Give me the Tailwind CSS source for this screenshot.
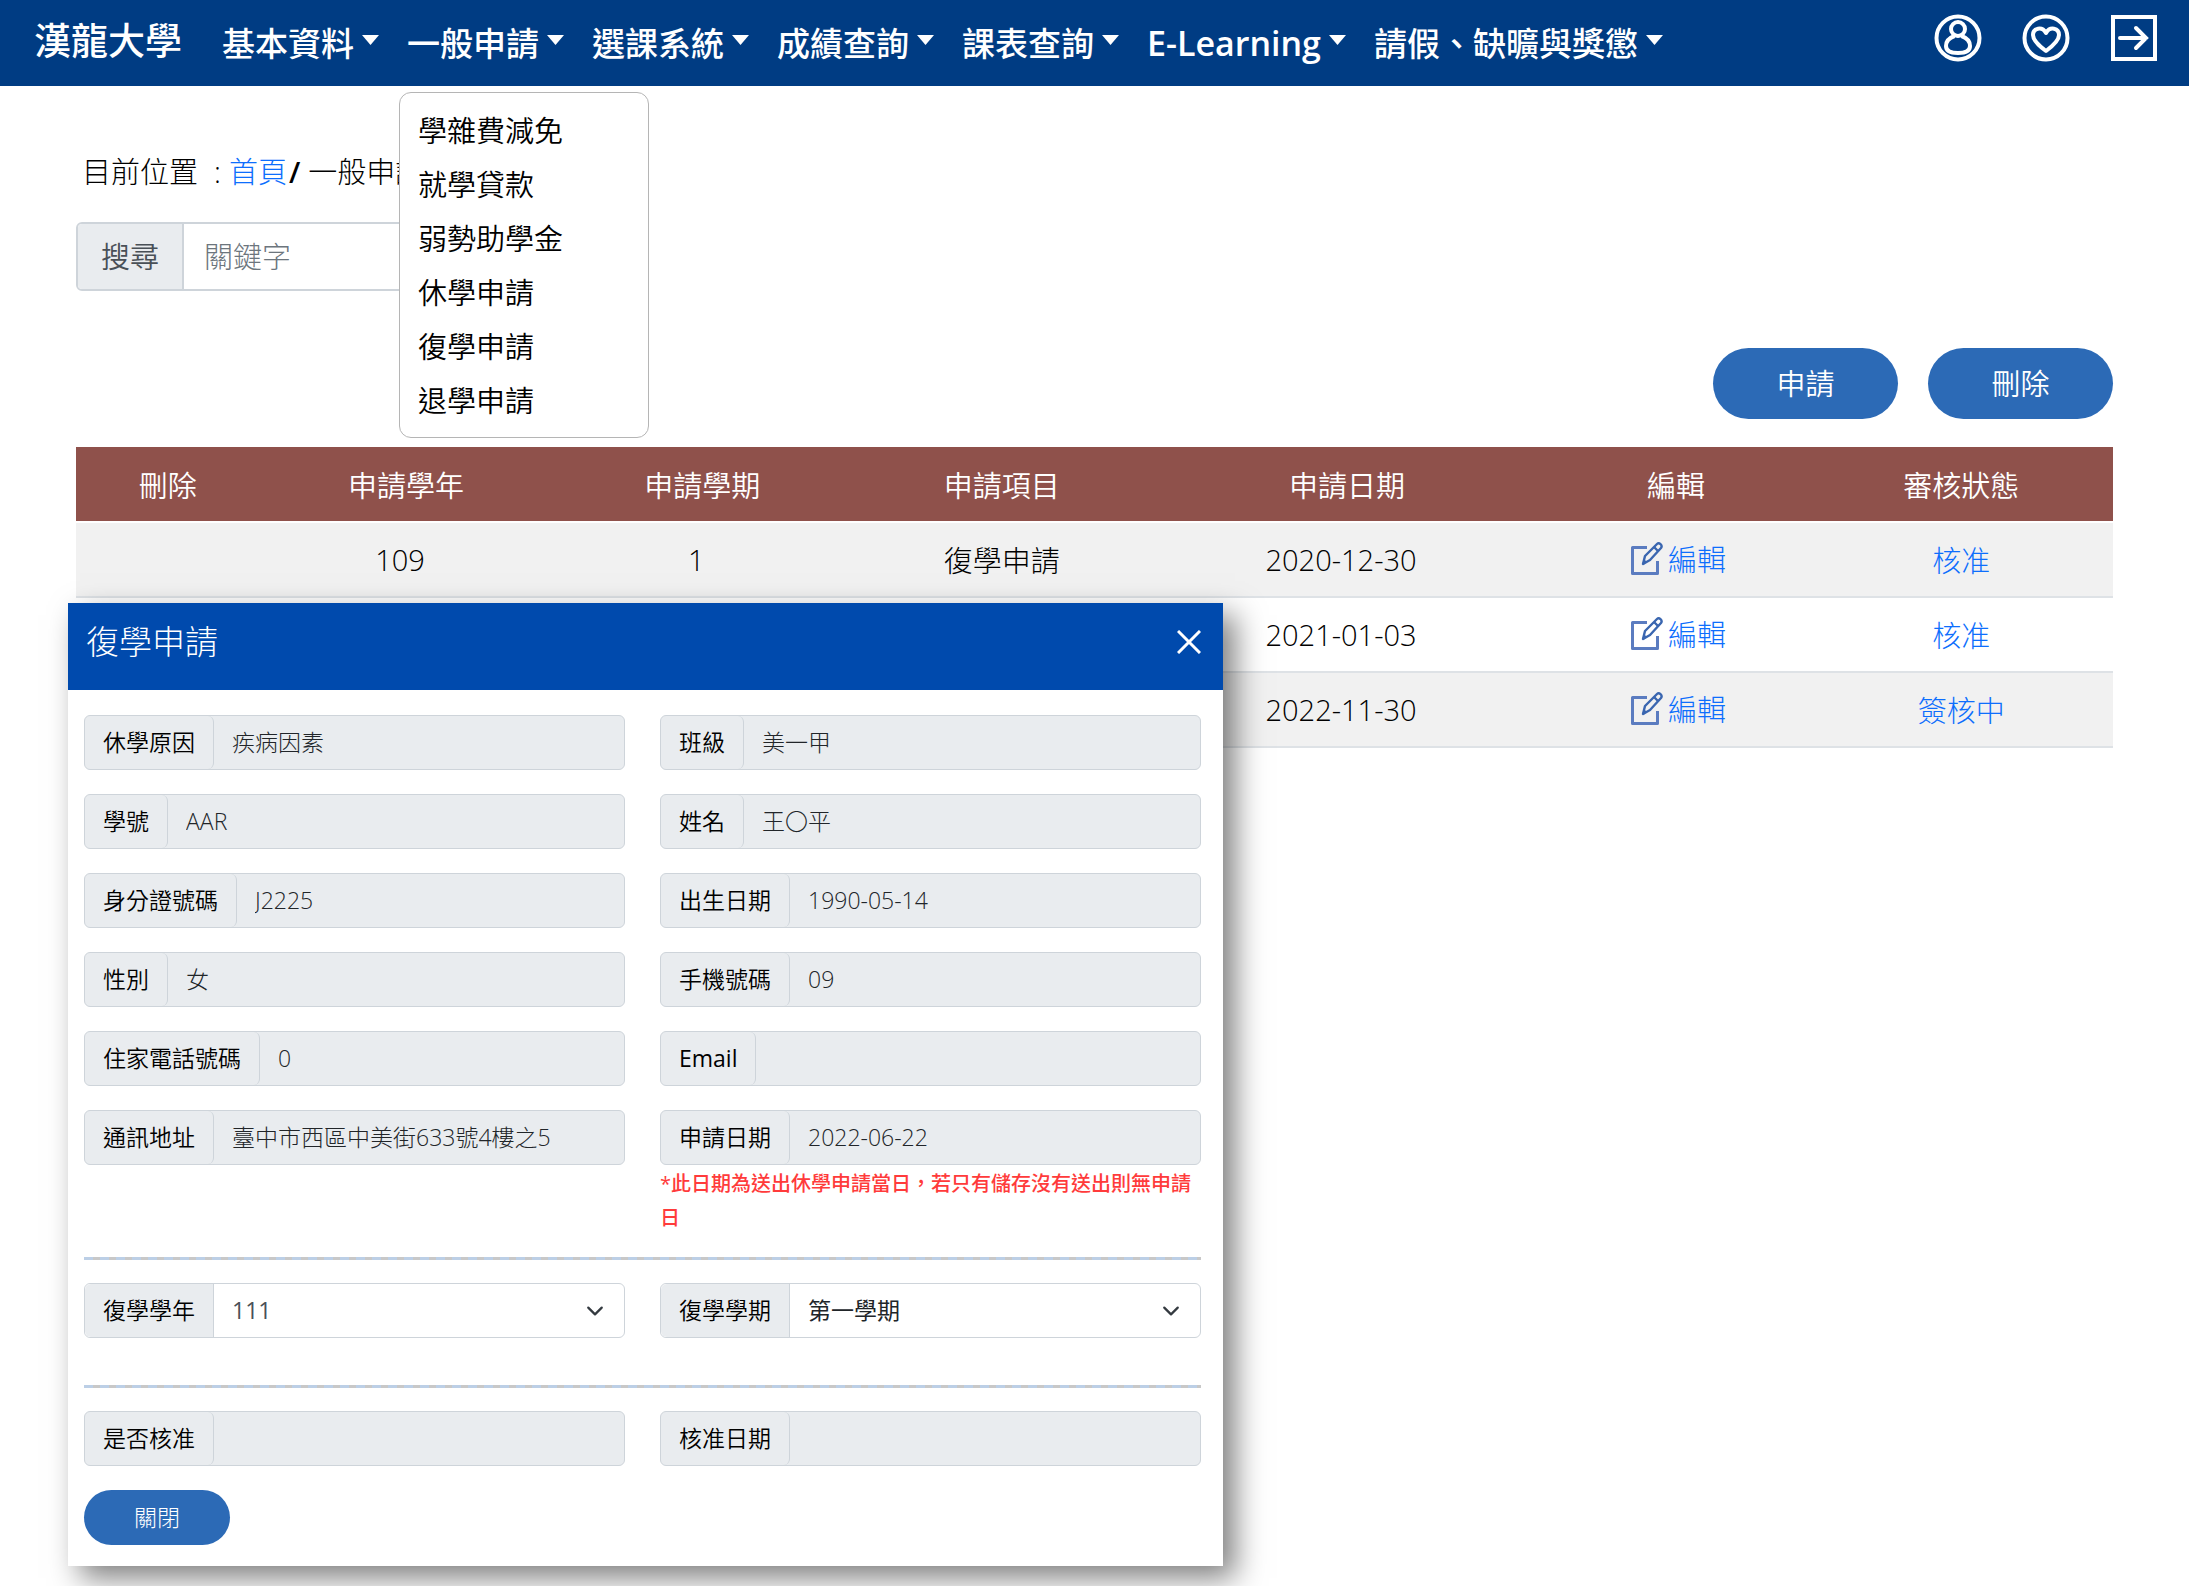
<!DOCTYPE html>
<html lang="zh-Hant">
<head>
<meta charset="utf-8">
<meta name="viewport" content="width=device-width, initial-scale=1">
<title>漢龍大學</title>
<script src="https://cdn.jsdelivr.net/npm/@tailwindcss/browser@4"></script>
</head>
<body class="relative min-h-screen overflow-x-hidden bg-white font-['Open_Sans','Noto_Sans_CJK_TC',sans-serif] font-light text-black">

<svg class="hidden" aria-hidden="true">
  <symbol id="caret" viewBox="0 0 17 10"><path d="M0 0h17L8.500 10z" fill="currentColor"/></symbol>
  <symbol id="chevron" viewBox="0 0 16 16"><path d="m2 5 6 6 6-6" fill="none" stroke="#343a40" stroke-width="2" stroke-linecap="round" stroke-linejoin="round"/></symbol>
  <symbol id="edit" viewBox="0 0 34 36">
    <path d="M17 6.500H2.500v26h25V20" fill="none" stroke="#5b7cc0" stroke-width="3" stroke-linejoin="round"/>
    <path d="M13 23l2-8L27 3c2-2 6 1 4 4L20 19z" fill="none" stroke="#3a66b0" stroke-width="2.400" stroke-linejoin="round"/>
    <path d="m24 6 4 4M13 23l3-3" fill="none" stroke="#3a66b0" stroke-width="2.400"/>
  </symbol>
</svg>

<header class="flex h-[86px] items-center bg-[#003c83] pl-[34px] pr-[31px] text-white">
  <a href="#" class="mr-10 pb-[6px] text-[37px] leading-none font-medium whitespace-nowrap">漢龍大學</a>
  <nav class="h-full">
    <ul class="flex h-full gap-[28px] text-[33px] leading-none font-medium whitespace-nowrap">
      <li class="flex items-center"><a href="#" class="flex items-center gap-2">基本資料<svg class="mb-[6px] h-[10px] w-[17px]"><use href="#caret"/></svg></a></li>
      <li class="relative flex items-center"><a href="#" class="flex items-center gap-2">一般申請<svg class="mb-[6px] h-[10px] w-[17px]"><use href="#caret"/></svg></a>
        <ul class="absolute top-[92px] -left-2 z-20 w-[250px] rounded-xl border border-[#b5b5b5] bg-white pt-[11px] pb-[9px] text-[29px] leading-[54px] font-[350] text-black">
          <li><a href="#" class="block px-[18px]">學雜費減免</a></li>
          <li><a href="#" class="block px-[18px]">就學貸款</a></li>
          <li><a href="#" class="block px-[18px]">弱勢助學金</a></li>
          <li><a href="#" class="block px-[18px]">休學申請</a></li>
          <li><a href="#" class="block px-[18px]">復學申請</a></li>
          <li><a href="#" class="block px-[18px]">退學申請</a></li>
        </ul>
      </li>
      <li class="flex items-center"><a href="#" class="flex items-center gap-2">選課系統<svg class="mb-[6px] h-[10px] w-[17px]"><use href="#caret"/></svg></a></li>
      <li class="flex items-center"><a href="#" class="flex items-center gap-2">成績查詢<svg class="mb-[6px] h-[10px] w-[17px]"><use href="#caret"/></svg></a></li>
      <li class="flex items-center"><a href="#" class="flex items-center gap-2">課表查詢<svg class="mb-[6px] h-[10px] w-[17px]"><use href="#caret"/></svg></a></li>
      <li class="flex items-center"><a href="#" class="flex items-center gap-2 text-[34px] font-semibold">E-Learning<svg class="mb-[6px] h-[10px] w-[17px]"><use href="#caret"/></svg></a></li>
      <li class="flex items-center"><a href="#" class="flex items-center gap-2">請假、缺曠與獎懲<svg class="mb-[6px] h-[10px] w-[17px]"><use href="#caret"/></svg></a></li>
    </ul>
  </nav>
  <div class="ml-auto flex gap-10 pb-[10px]">
    <button type="button" aria-label="個人資料">
      <svg class="size-12" viewBox="0 0 48 48" fill="none" stroke="currentColor" stroke-width="4"><circle cx="24" cy="24" r="21.500"/><circle cx="24" cy="15" r="7"/><path d="M20.500 22C15 24 12 28 12 32c0 5 5 7 12 7s12-2 12-7c0-4-3-8-8.500-10"/></svg>
    </button>
    <button type="button" aria-label="我的最愛">
      <svg class="size-12" viewBox="0 0 48 48" fill="none" stroke="currentColor" stroke-width="4"><circle cx="24" cy="24" r="21.500"/><path d="M24 37C16 31 11 26 11 21c0-7 9-9 13-2 4-7 13-5 13 2 0 5-5 10-13 16z" stroke-linejoin="round"/></svg>
    </button>
    <button type="button" aria-label="登出">
      <svg class="size-12" viewBox="0 0 48 48" fill="none" stroke="currentColor" stroke-width="4"><path d="M3 3h42v42H3z"/><path d="M10 24h26M26 14l10 10-10 10" stroke-linecap="round"/></svg>
    </button>
  </div>
</header>

<main class="px-[76px] pt-16">
  <nav aria-label="目前位置" class="flex pl-[6px] text-[29px] leading-[44px] whitespace-nowrap">
    <span class="mr-4">目前位置</span><span class="mr-2">:</span><a href="#" class="mr-[2px] text-[#0d6efd]">首頁</a><span class="mr-2 font-semibold">/</span><span>一般申請</span>
  </nav>

  <form class="mt-7 flex h-[69px] max-w-[480px] overflow-hidden rounded-md border-2 border-[#ced4da] text-[29px]">
    <label for="keyword" class="flex w-[106px] shrink-0 items-center justify-center border-r-2 border-[#ced4da] bg-[#e9ecef] font-[350] text-[#495057]">搜尋</label>
    <input id="keyword" type="text" placeholder="關鍵字" class="min-w-0 flex-1 px-[20px] placeholder:text-[#6c757d]">
  </form>

  <div class="mt-[57px] flex justify-end gap-[30px] text-[29px] font-[350] text-white">
    <button type="button" class="h-[71px] w-[185px] rounded-full bg-[#2c6ab6]">申請</button>
    <button type="button" class="h-[71px] w-[185px] rounded-full bg-[#2c6ab6]">刪除</button>
  </div>

  <table class="mt-7 w-full table-fixed border-collapse text-center text-[29px] leading-none">
    <colgroup>
      <col class="w-[9%]"><col class="w-[14.4%]"><col class="w-[14.7%]"><col class="w-[14.7%]"><col class="w-[19.2%]"><col class="w-[13.1%]"><col class="w-[14.9%]">
    </colgroup>
    <thead>
      <tr class="h-[75px] border-b-2 border-white bg-[#8f514b] text-white">
        <th class="pt-[2px] font-[350]">刪除</th><th class="pt-[2px] font-[350]">申請學年</th><th class="pt-[2px] font-[350]">申請學期</th><th class="pt-[2px] font-[350]">申請項目</th><th class="pt-[2px] font-[350]">申請日期</th><th class="pt-[2px] font-[350]">編輯</th><th class="pt-[2px] font-[350]">審核狀態</th>
      </tr>
    </thead>
    <tbody>
      <tr class="h-[75px] border-b-2 border-[#dee2e6] bg-[#f1f1f1]">
        <td></td><td class="pr-3">109</td><td class="pr-3">1</td><td class="pt-[2px]">復學申請</td><td class="pr-3">2020-12-30</td>
        <td class="pt-[2px] pl-1"><a href="#" class="inline-flex items-center gap-1 text-[#0d6efd]"><svg class="h-9 w-[34px]"><use href="#edit"/></svg>編輯</a></td>
        <td class="pt-[2px]"><a href="#" class="text-[#0d6efd]">核准</a></td>
      </tr>
      <tr class="h-[75px] border-b-2 border-[#dee2e6]">
        <td></td><td class="pr-3">109</td><td class="pr-3">2</td><td class="pt-[2px]">復學申請</td><td class="pr-3">2021-01-03</td>
        <td class="pt-[2px] pl-1"><a href="#" class="inline-flex items-center gap-1 text-[#0d6efd]"><svg class="h-9 w-[34px]"><use href="#edit"/></svg>編輯</a></td>
        <td class="pt-[2px]"><a href="#" class="text-[#0d6efd]">核准</a></td>
      </tr>
      <tr class="h-[75px] border-b-2 border-[#dee2e6] bg-[#f1f1f1]">
        <td></td><td class="pr-3">111</td><td class="pr-3">1</td><td class="pt-[2px]">復學申請</td><td class="pr-3">2022-11-30</td>
        <td class="pt-[2px] pl-1"><a href="#" class="inline-flex items-center gap-1 text-[#0d6efd]"><svg class="h-9 w-[34px]"><use href="#edit"/></svg>編輯</a></td>
        <td class="pt-[2px]"><a href="#" class="text-[#0d6efd]">簽核中</a></td>
      </tr>
    </tbody>
  </table>
</main>

<section role="dialog" aria-labelledby="dialog-title" class="absolute top-[603px] left-[68px] z-10 w-[1155px] max-w-[94vw] bg-white shadow-[12px_12px_28px_rgba(0,0,0,0.5)]">
  <header class="flex h-[87px] items-center justify-between bg-[#004aad] pr-[22px] pb-[10px] pl-[18px] text-white">
    <h2 id="dialog-title" class="text-[33px] leading-none">復學申請</h2>
    <button type="button" aria-label="關閉視窗"><svg class="size-6" viewBox="0 0 24 24" fill="none" stroke="currentColor" stroke-width="3"><path d="m1 1 22 22M23 1 1 23"/></svg></button>
  </header>
  <form class="pt-[25px] pr-[22px] pb-[21px] pl-4 text-[23px]">
    <div class="grid grid-cols-2 gap-x-[35px] gap-y-6">
      <div class="flex h-[55px] rounded-md border border-[#ced4da] bg-[#e9ecef]"><label for="f1" class="flex items-center rounded-md border-r border-[#ced4da] px-[18px] font-[350] whitespace-nowrap">休學原因</label><input id="f1" readonly value="疾病因素" class="min-w-0 flex-1 px-[18px] text-[#212529]"></div>
      <div class="flex h-[55px] rounded-md border border-[#ced4da] bg-[#e9ecef]"><label for="f2" class="flex items-center rounded-md border-r border-[#ced4da] px-[18px] font-[350] whitespace-nowrap">班級</label><input id="f2" readonly value="美一甲" class="min-w-0 flex-1 px-[18px] text-[#212529]"></div>
      <div class="flex h-[55px] rounded-md border border-[#ced4da] bg-[#e9ecef]"><label for="f3" class="flex items-center rounded-md border-r border-[#ced4da] px-[18px] font-[350] whitespace-nowrap">學號</label><input id="f3" readonly value="AAR" class="min-w-0 flex-1 px-[18px] text-[#212529]"></div>
      <div class="flex h-[55px] rounded-md border border-[#ced4da] bg-[#e9ecef]"><label for="f4" class="flex items-center rounded-md border-r border-[#ced4da] px-[18px] font-[350] whitespace-nowrap">姓名</label><input id="f4" readonly value="王〇平" class="min-w-0 flex-1 px-[18px] text-[#212529]"></div>
      <div class="flex h-[55px] rounded-md border border-[#ced4da] bg-[#e9ecef]"><label for="f5" class="flex items-center rounded-md border-r border-[#ced4da] px-[18px] font-[350] whitespace-nowrap">身分證號碼</label><input id="f5" readonly value="J2225" class="min-w-0 flex-1 px-[18px] text-[#212529]"></div>
      <div class="flex h-[55px] rounded-md border border-[#ced4da] bg-[#e9ecef]"><label for="f6" class="flex items-center rounded-md border-r border-[#ced4da] px-[18px] font-[350] whitespace-nowrap">出生日期</label><input id="f6" readonly value="1990-05-14" class="min-w-0 flex-1 px-[18px] text-[#212529]"></div>
      <div class="flex h-[55px] rounded-md border border-[#ced4da] bg-[#e9ecef]"><label for="f7" class="flex items-center rounded-md border-r border-[#ced4da] px-[18px] font-[350] whitespace-nowrap">性別</label><input id="f7" readonly value="女" class="min-w-0 flex-1 px-[18px] text-[#212529]"></div>
      <div class="flex h-[55px] rounded-md border border-[#ced4da] bg-[#e9ecef]"><label for="f8" class="flex items-center rounded-md border-r border-[#ced4da] px-[18px] font-[350] whitespace-nowrap">手機號碼</label><input id="f8" readonly value="09" class="min-w-0 flex-1 px-[18px] text-[#212529]"></div>
      <div class="flex h-[55px] rounded-md border border-[#ced4da] bg-[#e9ecef]"><label for="f9" class="flex items-center rounded-md border-r border-[#ced4da] px-[18px] font-[350] whitespace-nowrap">住家電話號碼</label><input id="f9" readonly value="0" class="min-w-0 flex-1 px-[18px] text-[#212529]"></div>
      <div class="flex h-[55px] rounded-md border border-[#ced4da] bg-[#e9ecef]"><label for="f10" class="flex items-center rounded-md border-r border-[#ced4da] px-[18px] font-normal whitespace-nowrap">Email</label><input id="f10" readonly value="" class="min-w-0 flex-1 px-[18px] text-[#212529]"></div>
      <div class="flex h-[55px] rounded-md border border-[#ced4da] bg-[#e9ecef]"><label for="f11" class="flex items-center rounded-md border-r border-[#ced4da] px-[18px] font-[350] whitespace-nowrap">通訊地址</label><input id="f11" readonly value="臺中市西區中美街633號4樓之5" class="min-w-0 flex-1 px-[18px] text-[#212529]"></div>
      <div>
        <div class="flex h-[55px] rounded-md border border-[#ced4da] bg-[#e9ecef]"><label for="f12" class="flex items-center rounded-md border-r border-[#ced4da] px-[18px] font-[350] whitespace-nowrap">申請日期</label><input id="f12" readonly value="2022-06-22" class="min-w-0 flex-1 px-[18px] text-[#212529]"></div>
        <p class="pt-[2px] text-[20px] leading-[34px] font-medium text-[#ff3b3b]">*此日期為送出休學申請當日，若只有儲存沒有送出則無申請日</p>
      </div>
    </div>

    <div class="mt-[22px] h-[3px] bg-[repeating-linear-gradient(90deg,#bccfe6_0_9px,#c8c8c8_9px_16px)]"></div>

    <div class="mt-[23px] grid grid-cols-2 gap-x-[35px]">
      <div class="relative flex h-[55px] rounded-md border border-[#ced4da] bg-white"><label for="year" class="flex items-center rounded-l-md border-r border-[#ced4da] bg-[#e9ecef] px-[18px] font-[350] whitespace-nowrap">復學學年</label><select id="year" class="min-w-0 flex-1 appearance-none rounded-r-md px-[18px] font-normal text-[#495057]"><option>111</option></select><svg class="pointer-events-none absolute top-[18px] right-5 size-[18px]"><use href="#chevron"/></svg></div>
      <div class="relative flex h-[55px] rounded-md border border-[#ced4da] bg-white"><label for="term" class="flex items-center rounded-l-md border-r border-[#ced4da] bg-[#e9ecef] px-[18px] font-[350] whitespace-nowrap">復學學期</label><select id="term" class="min-w-0 flex-1 appearance-none rounded-r-md px-[18px] font-normal text-[#212529]"><option>第一學期</option></select><svg class="pointer-events-none absolute top-[18px] right-5 size-[18px]"><use href="#chevron"/></svg></div>
    </div>

    <div class="mt-[47px] h-[3px] bg-[repeating-linear-gradient(90deg,#bccfe6_0_9px,#c8c8c8_9px_16px)]"></div>

    <div class="mt-[23px] grid grid-cols-2 gap-x-[35px]">
      <div class="flex h-[55px] rounded-md border border-[#ced4da] bg-[#e9ecef]"><label for="f13" class="flex items-center rounded-md border-r border-[#ced4da] px-[18px] font-[350] whitespace-nowrap">是否核准</label><input id="f13" readonly value="" class="min-w-0 flex-1 px-[18px] text-[#212529]"></div>
      <div class="flex h-[55px] rounded-md border border-[#ced4da] bg-[#e9ecef]"><label for="f14" class="flex items-center rounded-md border-r border-[#ced4da] px-[18px] font-[350] whitespace-nowrap">核准日期</label><input id="f14" readonly value="" class="min-w-0 flex-1 px-[18px] text-[#212529]"></div>
    </div>

    <button type="button" class="mt-6 block h-[55px] w-[146px] rounded-full bg-[#2c6ab6] text-white">關閉</button>
  </form>
</section>
</body>
</html>
